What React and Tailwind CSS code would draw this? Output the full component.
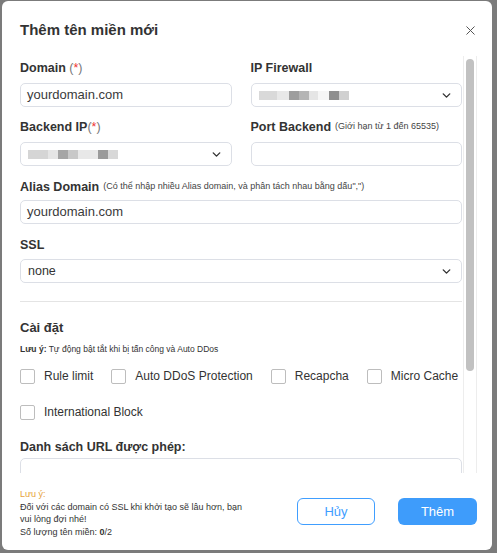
import { X, ChevronDown } from 'lucide-react';

const firewallBlur = [
    [18, '#d9d9d9'],
    [12, '#e8e8e8'],
    [10, '#9e9e9e'],
    [10, '#b5b5b5'],
    [9, '#e5e5e5'],
    [11, '#f6f6f6'],
    [10, '#8f8f8f'],
    [10, '#d0d0d0'],
];

const backendBlur = [
    [20, '#d5d5d5'],
    [10, '#e5e5e5'],
    [10, '#a5a5a5'],
    [10, '#c8c8c8'],
    [20, '#e8e8e8'],
    [10, '#9a9a9a'],
    [10, '#d8d8d8'],
];

const options = ['Rule limit', 'Auto DDoS Protection', 'Recapcha', 'Micro Cache', 'International Block'];

function Blur({ blocks }) {
    return (
        <div className="flex h-[9px]">
            {blocks.map(([w, c], i) => (
                <div key={i} style={{ width: w, background: c }} />
            ))}
        </div>
    );
}

function Label({ children, hint }) {
    return (
        <div className="h-[16px] flex items-center text-[12.5px] font-bold text-[#333]">
            {children}
            {hint && <span className="ml-1 text-[9px] font-normal text-[#444]">{hint}</span>}
        </div>
    );
}

function Req() {
    return (
        <span className="font-normal text-[#777]">
            (<span className="text-[#e33]">*</span>)
        </span>
    );
}

function Input({ value }) {
    return (
        <div className="h-[24px] border border-[#dcdfe6] rounded-[5px] px-[6px] flex items-center text-[13px] text-[#3a3a3a]">
            {value}
        </div>
    );
}

function Select({ children }) {
    return (
        <div className="h-[24px] border border-[#dcdfe6] rounded-[5px] pl-[7px] pr-[8px] flex items-center justify-between text-[12.5px] text-[#333]">
            <div>{children}</div>
            <ChevronDown size={13} strokeWidth={2.6} className="text-[#333]" />
        </div>
    );
}

export default function App() {
    return (
        <div
            className="w-[497px] h-[553px] bg-[#7b7b7b] pl-[2px] pt-[1px]"
            style={{ fontFamily: '"Liberation Sans", Arial, sans-serif' }}
        >
            <div className="w-[490px] h-[549px] bg-white rounded-[6px] flex flex-col">
                {/* Header */}
                <div className="h-[55px] pl-[18px] pr-[14px] pt-[19px] flex justify-between items-start">
                    <h3 className="text-[15px] leading-[20px] font-bold text-[#333]">Thêm tên miền mới</h3>
                    <X size={15} strokeWidth={1.6} className="text-[#555] mt-[3px]" />
                </div>

                {/* Body */}
                <div className="h-[417px] pl-[18px] pr-[15px] flex">
                    <div className="flex-1 overflow-hidden pt-[4px] pr-[1px]">
                        <div className="grid grid-cols-2 gap-x-[19px]">
                            <div>
                                <Label>
                                    Domain&nbsp;<Req />
                                </Label>
                                <div className="mt-[7px]">
                                    <Input value="yourdomain.com" />
                                </div>
                            </div>
                            <div>
                                <Label>IP Firewall</Label>
                                <div className="mt-[7px]">
                                    <Select>
                                        <Blur blocks={firewallBlur} />
                                    </Select>
                                </div>
                            </div>
                            <div className="mt-[12px]">
                                <Label>
                                    Backend IP<Req />
                                </Label>
                                <div className="mt-[7px]">
                                    <Select>
                                        <Blur blocks={backendBlur} />
                                    </Select>
                                </div>
                            </div>
                            <div className="mt-[12px]">
                                <Label hint="(Giới hạn từ 1 đến 65535)">Port Backend</Label>
                                <div className="mt-[7px]">
                                    <Input value="" />
                                </div>
                            </div>
                        </div>

                        <div className="mt-[13px]">
                            <Label hint={'(Có thể nhập nhiều Alias domain, và phân tách nhau bằng dấu",")'}>
                                Alias Domain
                            </Label>
                            <div className="mt-[5px]">
                                <Input value="yourdomain.com" />
                            </div>
                        </div>

                        <div className="mt-[13px]">
                            <Label>SSL</Label>
                            <div className="mt-[6px]">
                                <Select>none</Select>
                            </div>
                        </div>

                        <div className="mt-[18px] border-t border-[#e4e4e4]" />

                        <div className="mt-[18px] text-[13px] font-bold text-[#333] leading-[16px]">Cài đặt</div>
                        <div className="mt-[8px] text-[8.5px] text-[#333] leading-[11px]">
                            <b>Lưu ý:</b> Tự động bật tắt khi bị tấn công và Auto DDos
                        </div>

                        <div className="mt-[12px] flex flex-wrap gap-x-[18px] gap-y-[18px]">
                            {options.map((o) => (
                                <label key={o} className="flex items-center gap-[9px] h-[18px] text-[12px] text-[#333]">
                                    <span className="size-[15px] border border-[#bdbdbd] rounded-[2px] bg-white" />
                                    {o}
                                </label>
                            ))}
                        </div>

                        <div className="mt-[18px]">
                            <Label>Danh sách URL được phép:</Label>
                        </div>
                        <div className="mt-[3px] h-[60px] border border-[#dcdfe6] rounded-[5px]" />
                    </div>

                    {/* Scrollbar */}
                    <div className="w-[14px] border-x border-[#ededed] pt-[3px] flex justify-center">
                        <div className="w-[8px] h-[312px] bg-[#c1c1c1] rounded-full" />
                    </div>
                </div>

                {/* Footer */}
                <div className="flex-1 pl-[18px] pr-[15px] flex items-start justify-between">
                    <div className="pt-[15px] text-[9px] leading-[12.5px] text-[#333]">
                        <div className="text-[#e6a23c]">Lưu ý:</div>
                        <div>Đối với các domain có SSL khi khởi tạo sẽ lâu hơn, bạn</div>
                        <div>vui lòng đợi nhé!</div>
                        <div>
                            Số lượng tên miền: <b>0</b>/2
                        </div>
                    </div>
                    <div className="pt-[25px] flex gap-[23px]">
                        <button className="w-[78px] h-[27px] border border-[#409eff] rounded-[6px] text-[13px] text-[#409eff] bg-white">
                            Hủy
                        </button>
                        <button className="w-[79px] h-[27px] rounded-[6px] text-[13px] text-white bg-[#3e9cfb]">
                            Thêm
                        </button>
                    </div>
                </div>
            </div>
        </div>
    );
}
